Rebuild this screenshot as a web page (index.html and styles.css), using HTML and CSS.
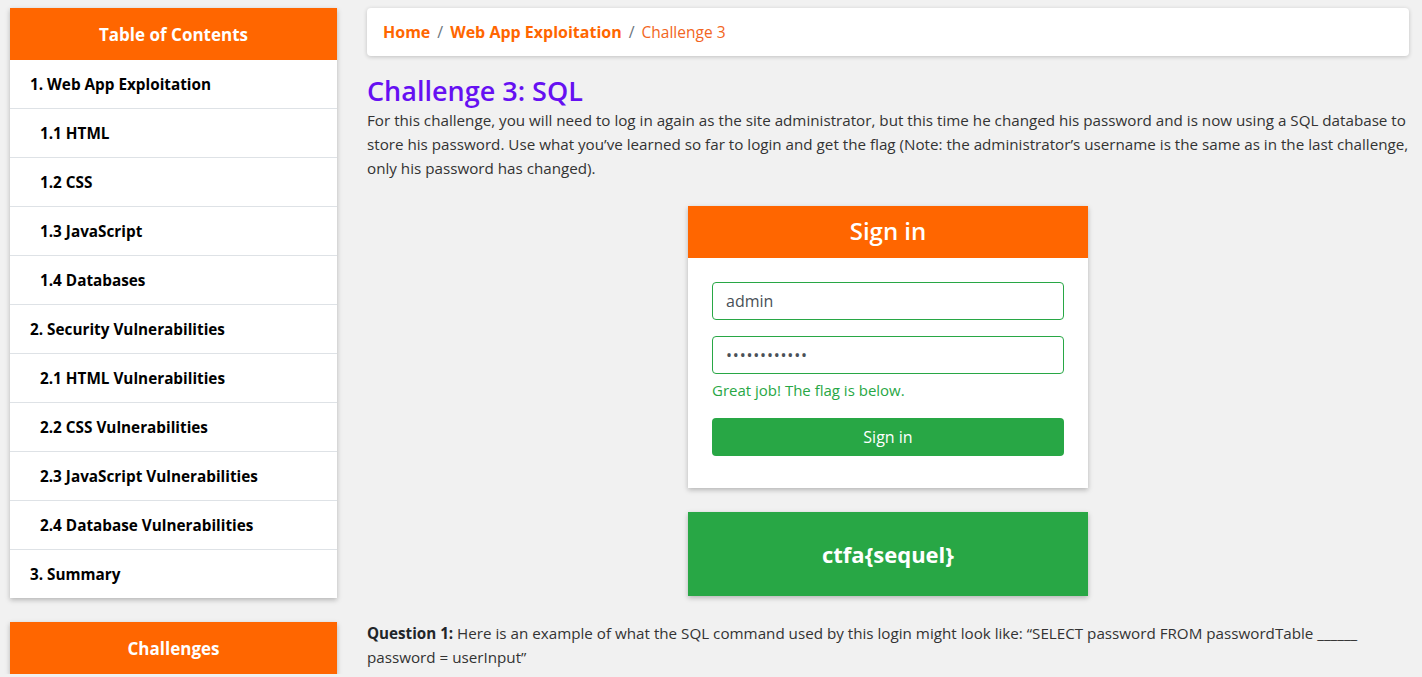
FILE: index.html
```html
<!DOCTYPE html>
<html>
<head>
<meta charset="utf-8">
<link rel="stylesheet" href="styles.css">
</head>
<body>
<div class="page">
  <aside class="sidebar">
    <div class="card toc">
      <div class="card-head">Table of Contents</div>
      <ul class="toc-list">
        <li class="lvl1">1. Web App Exploitation</li>
        <li class="lvl2">1.1 HTML</li>
        <li class="lvl2">1.2 CSS</li>
        <li class="lvl2">1.3 JavaScript</li>
        <li class="lvl2">1.4 Databases</li>
        <li class="lvl1">2. Security Vulnerabilities</li>
        <li class="lvl2">2.1 HTML Vulnerabilities</li>
        <li class="lvl2">2.2 CSS Vulnerabilities</li>
        <li class="lvl2">2.3 JavaScript Vulnerabilities</li>
        <li class="lvl2">2.4 Database Vulnerabilities</li>
        <li class="lvl1">3. Summary</li>
      </ul>
    </div>
    <div class="card challenges">
      <div class="card-head">Challenges</div>
    </div>
  </aside>
  <main class="main">
    <nav class="breadcrumb">
      <a class="crumb">Home</a><span class="sep">/</span><a class="crumb">Web App Exploitation</a><span class="sep">/</span><span class="crumb-active">Challenge 3</span>
    </nav>
    <h3 class="title">Challenge 3: SQL</h3>
    <p class="intro">For this challenge, you will need to log in again as the site administrator, but this time he changed his password and is now using a SQL database to store his password. Use what you’ve learned so far to login and get the flag (Note: the administrator’s username is the same as in the last challenge, only his password has changed).</p>
    <div class="signin">
      <div class="signin-head">Sign in</div>
      <div class="signin-body">
        <div class="input">admin</div>
        <div class="input pw">••••••••••••</div>
        <div class="feedback">Great job! The flag is below.</div>
        <div class="btn">Sign in</div>
      </div>
    </div>
    <div class="flag">ctfa{sequel}</div>
    <p class="question"><span class="qlabel">Question 1:</span> Here is an example of what the SQL command used by this login might look like: “SELECT password FROM passwordTable ______ password = userInput”</p>
  </main>
</div>
</body>
</html>
```

FILE: styles.css
```css
html, body {
  margin: 0;
  padding: 0;
  background: #f1f1f1;
  font-family: "Open Sans", "Noto Sans", sans-serif;
  color: #212529;
  overflow: hidden;
}
.page {
  display: flex;
  align-items: flex-start;
  padding: 8px 13px 0 10px;
  gap: 30px;
}
.sidebar {
  width: 327px;
  flex: none;
  display: flex;
  flex-direction: column;
  gap: 24px;
}
.card {
  background: #fff;
  box-shadow: 0 2px 5px rgba(0,0,0,0.25);
}
.card-head {
  background: #ff6600;
  color: #fff;
  font-weight: 700;
  font-size: 17px;
  height: 52px;
  display: flex;
  align-items: center;
  justify-content: center;
}
.toc-list {
  list-style: none;
  margin: 0;
  padding: 0;
}
.toc-list li {
  height: 48px;
  display: flex;
  align-items: center;
  border-bottom: 1px solid #dee2e6;
  font-weight: 700;
  font-size: 15.3px;
  color: #000;
}
.toc-list li:last-child { border-bottom: none; }
.toc-list .lvl1 { padding-left: 20px; }
.toc-list .lvl2 { padding-left: 30px; }
.main {
  flex: 1;
  min-width: 0;
}
.breadcrumb {
  background: #fff;
  border-radius: 4px;
  box-shadow: 0 1px 4px rgba(0,0,0,0.2);
  height: 48px;
  display: flex;
  align-items: center;
  padding: 0 16px;
  font-size: 16px;
}
.crumb { color: #ff6600; font-weight: 700; }
.sep { color: #6c757d; padding: 0 7px; }
.crumb-active { color: #f26522; font-size: 15.5px; }
.title {
  color: #6610f2;
  font-size: 27px;
  font-weight: 600;
  margin: 18px 0 0;
  line-height: 34px;
}
.intro, .question {
  font-size: 15.2px;
  line-height: 24px;
  margin: 0;
  color: #333;
}
.signin {
  width: 400px;
  margin: 26px auto 0;
  background: #fff;
  box-shadow: 0 2px 5px rgba(0,0,0,0.25);
}
.signin-head {
  background: #ff6600;
  color: #fff;
  font-size: 24px;
  font-weight: 600;
  height: 52px;
  padding-bottom: 3px;
  box-sizing: border-box;
  display: flex;
  align-items: center;
  justify-content: center;
}
.signin-body {
  padding: 24px 24px 32px;
  display: flex;
  flex-direction: column;
}
.input {
  height: 38px;
  box-sizing: border-box;
  border: 1px solid #28a745;
  border-radius: 4px;
  padding: 0 13px;
  display: flex;
  align-items: center;
  font-size: 16px;
  color: #495057;
  margin-bottom: 16px;
}
.input.pw {
  margin-bottom: 4px;
  font-size: 16px;
  letter-spacing: 0.8px;
}
.feedback {
  color: #28a745;
  font-size: 15px;
  line-height: 24px;
  margin-bottom: 16px;
}
.btn {
  background: #28a745;
  color: #fff;
  border-radius: 4px;
  height: 38px;
  display: flex;
  align-items: center;
  justify-content: center;
  font-size: 16px;
}
.flag {
  width: 400px;
  height: 84px;
  margin: 24px auto 0;
  background: #28a745;
  color: #fff;
  font-weight: 700;
  font-size: 22px;
  display: flex;
  align-items: center;
  justify-content: center;
  box-shadow: 0 2px 5px rgba(0,0,0,0.25);
}
.question { margin-top: 25px; }
.qlabel { color: #212529; font-weight: 700; }
```
